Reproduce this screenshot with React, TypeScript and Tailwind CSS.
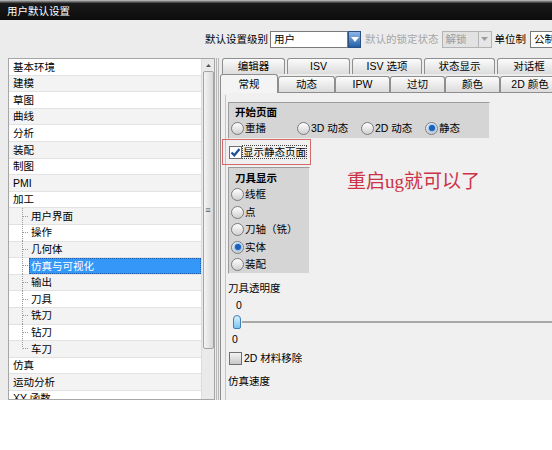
import React from "react";

const tree: { t: string; child?: boolean; last?: boolean; sel?: boolean }[] = [
  { t: "基本环境" },
  { t: "建模" },
  { t: "草图" },
  { t: "曲线" },
  { t: "分析" },
  { t: "装配" },
  { t: "制图" },
  { t: "PMI" },
  { t: "加工" },
  { t: "用户界面", child: true },
  { t: "操作", child: true },
  { t: "几何体", child: true },
  { t: "仿真与可视化", child: true, sel: true },
  { t: "输出", child: true },
  { t: "刀具", child: true },
  { t: "铣刀", child: true },
  { t: "钻刀", child: true },
  { t: "车刀", child: true, last: true },
  { t: "仿真" },
  { t: "运动分析" },
  { t: "XY 函数" },
];

function Radio({ on, label }: { on?: boolean; label: string }) {
  return (
    <div className="flex items-center gap-[1px]">
      <span className="w-[13px] h-[13px] rounded-full border border-[#7c7c7c] bg-gradient-to-b from-[#ffffff] to-[#d0d0d0] flex items-center justify-center">
        {on && (
          <span className="w-[6px] h-[6px] rounded-full bg-[#1c5fb8] shadow-[0_0_2px_1px_#7fb6f0]" />
        )}
      </span>
      <span>{label}</span>
    </div>
  );
}

function Check({ on }: { on?: boolean }) {
  return (
    <span
      className={`w-[13px] h-[13px] border border-[#6f6f6f] flex items-center justify-center ${
        on ? "bg-white" : "bg-gradient-to-b from-[#f4f4f4] to-[#c8c8c8]"
      }`}
    >
      {on && (
        <svg width="11" height="11" viewBox="0 0 11 11">
          <path d="M1.5 5.5 L4.3 8.3 L9.5 2" fill="none" stroke="#1e4f9c" strokeWidth="2.2" />
        </svg>
      )}
    </span>
  );
}

function Tab({ w, label, active }: { w: number; label: string; active?: boolean }) {
  return (
    <div
      style={{ width: w }}
      className={`shrink-0 flex items-center justify-center border border-b-0 border-[#8e8e8e] rounded-t-[3px] ${
        active
          ? "bg-[#f4f4f4] h-[19px] -mb-[1px] relative z-10"
          : "bg-gradient-to-b from-[#fbfbfb] to-[#dcdcdc] h-[16px]"
      }`}
    >
      {label}
    </div>
  );
}

function TreeRow({ item, i }: { item: (typeof tree)[number]; i: number }) {
  return (
    <div
      className={`h-[16.6px] flex items-center border-b border-[#e2e2e2] ${
        i % 2 === 0 ? "bg-white" : "bg-[#f3f3f3]"
      }`}
    >
      {item.child ? (
        <>
          <svg width="18" height="17" viewBox="0 0 18 17" className="shrink-0 ml-[2px]">
            <line x1="11.5" y1="0" x2="11.5" y2={item.last ? 8.5 : 17} stroke="#9a9a9a" strokeDasharray="1 1" />
            <line x1="12" y1="8.5" x2="18" y2="8.5" stroke="#9a9a9a" strokeDasharray="1 1" />
          </svg>
          <span
            className={`h-full flex-1 flex items-center pl-[2px] ${
              item.sel ? "bg-[#3597f7] text-white outline outline-1 outline-dotted outline-[#1b5fb0] -outline-offset-1" : ""
            }`}
          >
            {item.t}
          </span>
        </>
      ) : (
        <span className="pl-[4px]">{item.t}</span>
      )}
    </div>
  );
}

export default function App() {
  return (
    <div className="w-[552px] h-[450px] bg-white overflow-hidden text-[10.5px] text-black font-['Liberation_Sans','Noto_Sans_CJK_SC',sans-serif] leading-none">
      {/* title bar */}
      <div className="h-[20px] bg-gradient-to-b from-[#c8c8c8] via-[#1a1a1a] via-[18%] to-[#0c0c0c] flex items-center pl-[7px] pt-[2px] text-white text-[10.5px]">
        用户默认设置
      </div>

      <div className="h-[380px] bg-[#ececec] flex flex-col">
        {/* toolbar */}
        <div className="h-[38px] flex items-center pl-[205px] whitespace-nowrap">
          <span>默认设置级别</span>
          <div className="ml-[2px] flex h-[17px]">
            <div className="w-[78px] bg-white border border-[#7a7a7a] flex items-center pl-[3px]">用户</div>
            <div className="w-[13px] bg-gradient-to-b from-[#8fb7e6] to-[#1f5fa8] border border-[#2b4f80] flex items-center justify-center">
              <svg width="8" height="5" viewBox="0 0 8 5"><path d="M0 0 H8 L4 5 Z" fill="white" /></svg>
            </div>
          </div>
          <span className="ml-[4px] text-[#a5a5a5]">默认的锁定状态</span>
          <div className="ml-[3px] flex h-[17px]">
            <div className="w-[37px] bg-[#e2e2e2] border border-[#b4b4b4] flex items-center pl-[3px] text-[#9a9a9a]">解锁</div>
            <div className="w-[13px] bg-[#e6e6e6] border border-l-0 border-[#b4b4b4] flex items-center justify-center">
              <svg width="7" height="4" viewBox="0 0 7 4"><path d="M0 0 H7 L3.5 4 Z" fill="#9c9c9c" /></svg>
            </div>
          </div>
          <span className="ml-[3px]">单位制</span>
          <div className="ml-[4px] h-[17px] w-[40px] bg-white border border-[#7a7a7a] flex items-center pl-[3px]">公制</div>
        </div>

        {/* main */}
        <div className="flex-1 flex min-h-0">
          {/* tree list */}
          <div className="ml-[8px] w-[207px] flex border border-[#a6a6a6] bg-white">
            <div className="flex-1 overflow-hidden">
              {tree.map((it, i) => (
                <TreeRow key={it.t} item={it} i={i} />
              ))}
            </div>
            <div className="w-[13px] bg-[#eaeaea] border-l border-[#dcdcdc] flex flex-col items-center">
              <div className="h-[12px] flex items-center justify-center">
                <svg width="5" height="3" viewBox="0 0 5 3"><path d="M0 3 L2.5 0 L5 3 Z" fill="#555" /></svg>
              </div>
              <div className="w-[11px] h-[278px] rounded-[2px] border border-[#a4a4a4] bg-gradient-to-r from-[#f4f4f4] to-[#d8d8d8] flex items-center justify-center">
                <span className="text-[9px] text-[#555]">≡</span>
              </div>
            </div>
          </div>

          {/* splitter */}
          <div className="w-[5px] flex justify-center gap-[1px]">
            <span className="w-px bg-[#b8b8b8]" />
            <span className="w-px bg-[#b8b8b8]" />
          </div>

          {/* right */}
          <div className="flex-1 flex flex-col overflow-hidden min-w-0">
            <div className="flex gap-[2px] pl-[2px] whitespace-nowrap">
              <Tab w={63} label="编辑器" />
              <Tab w={63} label="ISV" />
              <Tab w={70} label="ISV 选项" />
              <Tab w={71} label="状态显示" />
              <Tab w={64} label="对话框" />
            </div>
            <div className="flex items-end h-[18px] whitespace-nowrap">
              <Tab w={58} label="常规" active />
              <Tab w={57} label="动态" />
              <Tab w={55} label="IPW" />
              <Tab w={55} label="过切" />
              <Tab w={55} label="颜色" />
              <Tab w={60} label="2D 颜色" />
            </div>

            <div className="flex-1 border-t border-l border-[#8e8e8e] bg-[#f0f0f0] pl-[4px] pt-[2px]">
              <div className="h-full border-l border-[#c4c4c4] pl-[2px] pt-[7px] whitespace-nowrap">
                {/* 开始页面 */}
                <div className="w-[262px] h-[37px] bg-[#d5d5d5] border border-[#9c9c9c] border-r-[#eeeeee] border-b-[#eeeeee] px-[2px] pt-[4px] flex flex-col gap-[4px]">
                  <span className="font-bold pl-[4px]">开始页面</span>
                  <div className="flex">
                    <div className="w-[66px]"><Radio label="重播" /></div>
                    <div className="w-[64px]"><Radio label="3D 动态" /></div>
                    <div className="w-[64px]"><Radio label="2D 动态" /></div>
                    <Radio on label="静态" />
                  </div>
                </div>

                {/* checkbox */}
                <div className="flex items-start">
                  <div className="-ml-[6px] w-[89px] h-[26px] border border-[#d46a6a] flex items-center pl-[6px] gap-[1px]">
                    <Check on />
                    <span className="outline outline-1 outline-dotted outline-[#444] py-[1px]">显示静态页面</span>
                  </div>
                </div>

                <div className="flex mt-[2px]">
                  <div className="w-[82px] h-[107px] bg-[#d5d5d5] border border-[#9c9c9c] border-r-[#eeeeee] border-b-[#eeeeee] px-[2px] pt-[5px] flex flex-col gap-[4.5px]">
                    <span className="font-bold pl-[4px]">刀具显示</span>
                    <Radio label="线框" />
                    <Radio label="点" />
                    <Radio label="刀轴（铣）" />
                    <Radio on label="实体" />
                    <Radio label="装配" />
                  </div>
                  <div className="ml-[37px] mt-[5px] text-[19px] text-[#cc3346] font-['Liberation_Serif','Noto_Sans_CJK_SC',serif]">
                    重启ug就可以了
                  </div>
                </div>

                <div className="mt-[9px]">刀具透明度</div>
                <div className="mt-[6px] pl-[8px]">0</div>
                <div className="mt-[5px] flex items-center pl-[5px]">
                  <span className="w-[8px] h-[14px] rounded-t-[4px] rounded-b-[2px] border border-[#3f7fb8] bg-gradient-to-b from-[#d8f0ff] to-[#7cc4ee]" />
                  <span className="flex-1 h-[2px] bg-[#a8a8a8] ml-[1px]" />
                </div>
                <div className="mt-[5px] pl-[4px]">0</div>
                <div className="mt-[7px] flex items-center gap-[2px] pl-[1px]">
                  <Check />
                  <span>2D 材料移除</span>
                </div>
                <div className="mt-[11px]">仿真速度</div>
              </div>
            </div>
          </div>
        </div>
      </div>
    </div>
  );
}
